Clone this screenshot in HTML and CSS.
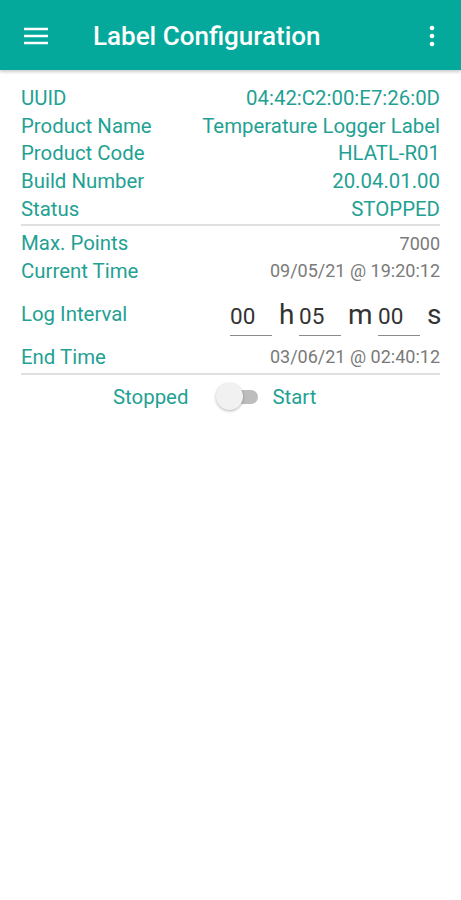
FILE: index.html
```html
<!DOCTYPE html>
<html>
<head>
	<title>Label Configuration</title>
	<link rel="stylesheet" href="styles.css">
</head>
<body>
	<header class="appbar">
		<svg class="menu" width="24" height="24" viewBox="0 0 24 24"><path d="M0 5h24M0 12h24M0 19h24" stroke="#fff" stroke-width="2.6" fill="none"/></svg>
		<h1 class="title">Label Configuration</h1>
		<svg class="more" width="24" height="24" viewBox="0 0 24 24"><circle cx="12" cy="4" r="2.3" fill="#fff"/><circle cx="12" cy="12" r="2.3" fill="#fff"/><circle cx="12" cy="20" r="2.3" fill="#fff"/></svg>
	</header>

	<main class="content">
		<!-- info -->
		<section class="info">
			<div class="row"><span>UUID</span><span>04:42:C2:00:E7:26:0D</span></div>
			<div class="row"><span>Product Name</span><span>Temperature Logger Label</span></div>
			<div class="row"><span>Product Code</span><span>HLATL-R01</span></div>
			<div class="row"><span>Build Number</span><span>20.04.01.00</span></div>
			<div class="row"><span>Status</span><span>STOPPED</span></div>
		</section>

		<!-- settings -->
		<section class="settings">
			<div class="row"><span>Max. Points</span><span class="val">7000</span></div>
			<div class="row"><span>Current Time</span><span class="val">09/05/21 @ 19:20:12</span></div>
			<div class="row interval">
				<span>Log Interval</span>
				<div class="fields">
					<span class="field">00</span><span class="unit">h</span>
					<span class="field">05</span><span class="unit wide">m</span>
					<span class="field">00</span><span class="unit last">s</span>
				</div>
			</div>
			<div class="row end"><span>End Time</span><span class="val">03/06/21 @ 02:40:12</span></div>
		</section>

		<div class="toggle">
			<span>Stopped</span>
			<span class="switch"><span class="knob"></span></span>
			<span>Start</span>
		</div>
	</main>
</body>
</html>
```

FILE: styles.css
```css
body {
	margin: 0;
	font-family: Roboto, "Liberation Sans", sans-serif;
	background: #fff;
}
.appbar {
	height: 70px;
	background: #05a99b;
	display: flex;
	align-items: center;
	padding: 2px 17px 0 24px;
	box-sizing: border-box;
	box-shadow: 0 2px 3px rgba(0,0,0,0.2);
}
.menu {
	width: 24px;
	height: 24px;
}
.title {
	flex: 1;
	margin: 0 0 0 45px;
	color: #fff;
	font-size: 26px;
	font-weight: 500;
}
.content {
	padding: 0 21px;
	color: #1fa193;
	font-size: 20.4px;
}
.info {
	padding-top: 14px;
	padding-bottom: 2px;
	border-bottom: 2px solid #e0e0e0;
}
.row {
	display: flex;
	justify-content: space-between;
	align-items: center;
	height: 27.7px;
	white-space: nowrap;
}
.settings {
	padding-top: 3px;
	padding-bottom: 2px;
	border-bottom: 2px solid #e0e0e0;
}
.val {
	color: #7a7a7a;
	font-size: 18px;
}
.interval {
	height: 42px;
	margin-top: 8px;
}
.fields {
	display: flex;
	align-items: baseline;
	margin-top: 9px;
	color: #333;
	font-size: 22.5px;
}
.field {
	width: 42px;
	padding-bottom: 6px;
	border-bottom: 1px solid #8a8a8a;
}
.unit {
	width: 27px;
	padding-left: 7px;
	box-sizing: border-box;
	font-size: 28px;
	line-height: 1;
}
.unit.wide {
	width: 37px;
}
.unit.last {
	width: 20px;
}
.end {
	margin-top: 8px;
}
.toggle {
	display: flex;
	align-items: center;
	height: 44px;
	padding-left: 92px;
}
.switch {
	position: relative;
	width: 30px;
	height: 14px;
	border-radius: 7px;
	background: #bdbdbd;
	margin: 0 14px 0 40px;
}
.knob {
	position: absolute;
	left: -12px;
	top: -6.5px;
	width: 27px;
	height: 27px;
	border-radius: 50%;
	background: #f1f1f1;
	box-shadow: 0 1px 3px rgba(0,0,0,0.3);
}
```
